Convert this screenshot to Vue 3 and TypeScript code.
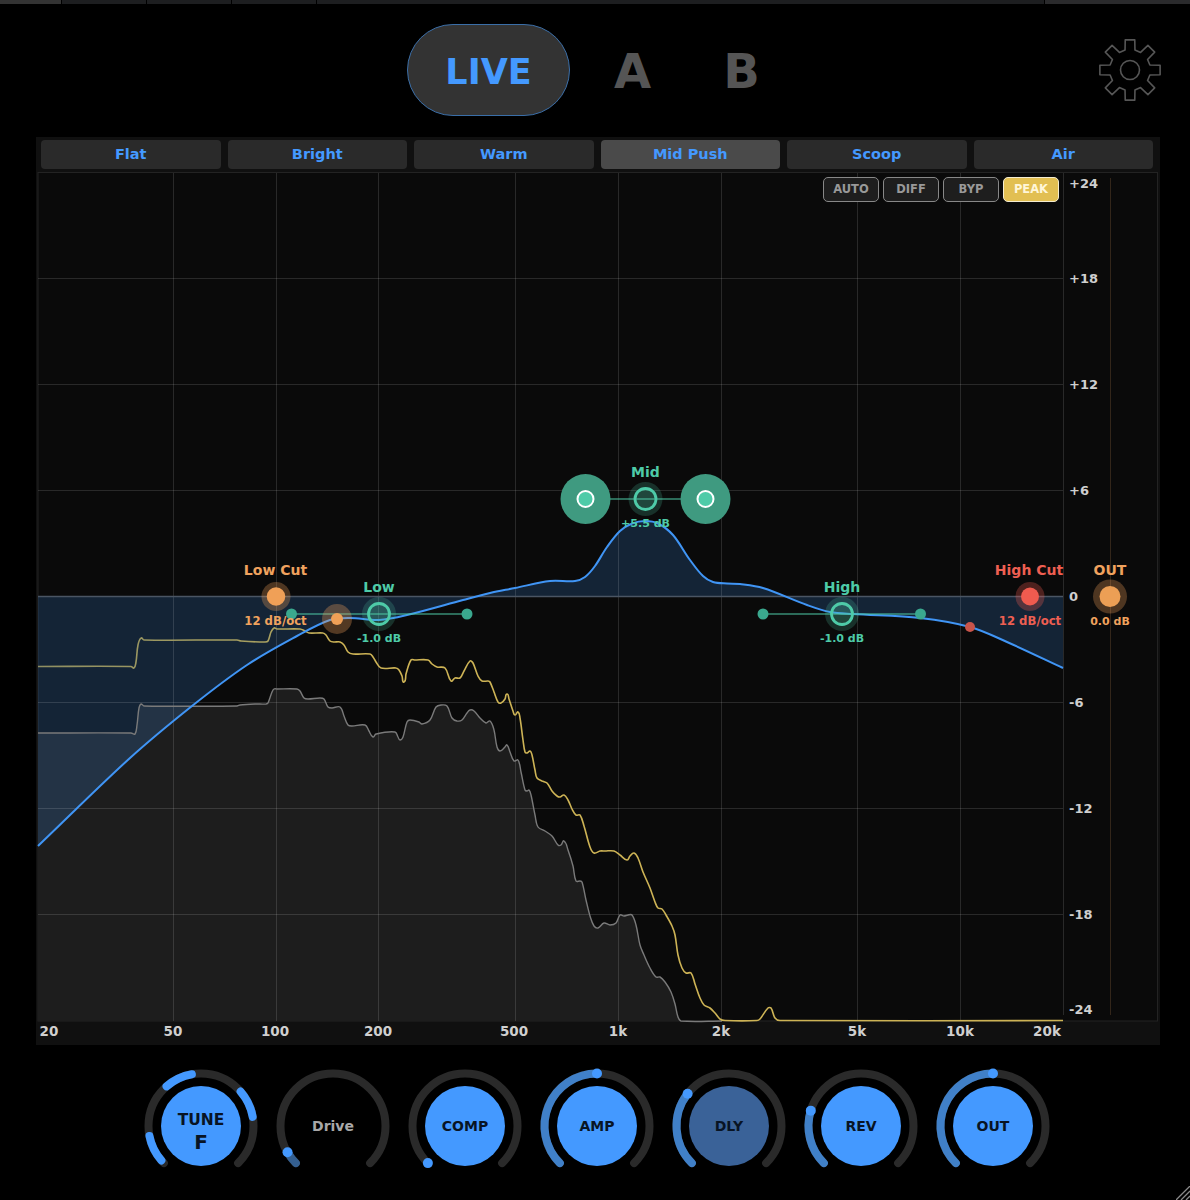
<script setup lang="ts">
import { computed } from 'vue'

type Pt = [number, number]

interface Knob {
  label: string
  sub?: string
  value?: number
  disc: 'on' | 'dim' | 'off'
  segments?: [number, number][]
}

const presets = ['Flat', 'Bright', 'Warm', 'Mid Push', 'Scoop', 'Air']
const toggles = ['AUTO', 'DIFF', 'BYP', 'PEAK']

const dbLabels = [
  { text: '+24', y: 183 }, { text: '+18', y: 278 }, { text: '+12', y: 384 }, { text: '+6', y: 490 },
  { text: '0', y: 596 }, { text: '-6', y: 702 }, { text: '-12', y: 808 }, { text: '-18', y: 914 }, { text: '-24', y: 1009 },
]
const hLines = [278.5, 384.5, 490.5, 702.5, 808.5, 914.5]
const vLines = [173.5, 276.5, 378.5, 515.5, 618.5, 721.5, 857.5, 960.5]
const freqLabels = [
  { text: '20', x: 49 }, { text: '50', x: 173 }, { text: '100', x: 275 }, { text: '200', x: 378 }, { text: '500', x: 514 },
  { text: '1k', x: 618 }, { text: '2k', x: 721 }, { text: '5k', x: 857 }, { text: '10k', x: 960 }, { text: '20k', x: 1047 },
]

const bands = [
  { name: 'Low', x: 379, gain: '-1.0 dB', y: 614, left: 291.5, right: 467, big: false },
  { name: 'Mid', x: 645.5, gain: '+5.5 dB', y: 499, left: 585.5, right: 705.5, big: true },
  { name: 'High', x: 842, gain: '-1.0 dB', y: 614, left: 763, right: 920.5, big: false },
]

const knobs: Knob[] = [
  { label: 'TUNE', sub: 'F', disc: 'on', segments: [[-131, -101], [-41, -10], [49, 80]] },
  { label: 'Drive', value: -120, disc: 'off' },
  { label: 'COMP', value: -135, disc: 'on' },
  { label: 'AMP', value: 0, disc: 'on' },
  { label: 'DLY', value: -52, disc: 'dim' },
  { label: 'REV', value: -73, disc: 'on' },
  { label: 'OUT', value: 0, disc: 'on' },
]

const peakPts: Pt[] = [
  [38, 666.5], [131, 666.5], [134, 668], [136, 662], [138, 645], [141, 638], [144, 640], [237, 640], [241, 641], [265, 642],
  [268, 641], [271, 632], [274, 628], [277, 629], [300, 629], [305, 631], [309, 633], [323, 633], [326, 635], [330, 641],
  [334, 642], [340, 642], [344, 645], [348, 652], [353, 654], [370, 654], [373, 657], [376, 662], [381, 668],
  [396, 668], [399, 670], [402, 676], [404, 682], [406, 674], [411, 660], [415, 660], [428, 660], [432, 664], [437, 667],
  [445, 668], [451, 681], [455, 678], [460, 678], [464, 671], [470, 661], [473, 663], [478, 676], [482, 681], [488, 681],
  [490, 682], [494, 692], [498, 702], [501, 703], [505, 699], [507, 694], [509, 699], [513, 711], [515, 715], [518, 712],
  [520, 718], [523, 740], [525, 752], [527, 753], [530, 751], [532, 755], [535, 770], [537, 778], [542, 781], [547, 783],
  [552, 791], [557, 796], [560, 797], [564, 795], [568, 800], [572, 809], [576, 815], [580, 815], [584, 826], [590, 847],
  [594, 853], [600, 851], [605, 851], [614, 851], [620, 855], [627, 860], [630, 856], [634, 853], [638, 858], [643, 872],
  [650, 888], [655, 902], [658, 908], [662, 909], [666, 915], [672, 926], [675, 935], [678, 955], [682, 968], [686, 973],
  [691, 973], [695, 984], [700, 998], [704, 1005], [710, 1008], [715, 1013], [720, 1019], [725, 1020.5], [757, 1020.5],
  [760, 1019], [768, 1008], [771, 1008], [775, 1018], [780, 1020.5], [1063, 1020.5],
]

const rmsPts: Pt[] = [
  [38, 733], [131, 733], [135, 734], [137, 725], [139, 708], [141, 704], [144, 706], [237, 706], [240, 705], [255, 704],
  [266, 704], [268, 703], [272, 692], [274, 689], [277, 689], [297, 689], [300, 691], [304, 698], [308, 699], [320, 698],
  [324, 699], [328, 707], [332, 708], [340, 707], [344, 716], [348, 725], [352, 726], [365, 725], [369, 731], [373, 737],
  [376, 734], [395, 732], [398, 737], [400, 740], [403, 737], [407, 722], [410, 720], [419, 722], [422, 724], [430, 720],
  [436, 707], [441, 705], [447, 706], [452, 718], [457, 721], [462, 720], [467, 713], [470, 710], [474, 711], [480, 718],
  [486, 723], [490, 721], [494, 730], [497, 747], [500, 751], [505, 747], [507, 745], [510, 752], [514, 761], [518, 760],
  [521, 772], [525, 790], [527, 791], [529, 790], [531, 795], [535, 815], [538, 827], [545, 831], [552, 836], [558, 845],
  [561, 845], [564, 841], [568, 850], [573, 866], [576, 881], [580, 881], [582, 882], [586, 900], [590, 916], [594, 926],
  [598, 928], [604, 923], [610, 925], [616, 923], [620, 915], [624, 916], [628, 915], [632, 915], [636, 925], [640, 945],
  [644, 955], [650, 968], [656, 977], [660, 977], [665, 982], [671, 992], [675, 1004], [678, 1017], [681, 1021], [722, 1021],
]

const eqPts: Pt[] = [
  [38, 846], [130, 758], [192, 706], [247, 665], [297, 636], [330, 620], [350, 618], [379, 620],
  [407, 615], [463, 600], [490, 593], [515, 588], [550, 581], [575, 581], [585, 577], [595, 566], [607, 547], [620, 531],
  [632, 523.5], [645, 521], [658, 523.5], [673, 535], [690, 560], [703, 576], [713, 582], [727, 583.5], [740, 584], [763, 588],
  [807, 605], [830, 612], [853, 614], [920, 618], [970, 627], [1007, 642], [1063, 668],
]

// spline through the traced points, handles scaled to each segment so long flats don't kink
function smooth(pts: Pt[]): string {
  let d = `M${pts[0][0]} ${pts[0][1]}`
  for (let i = 0; i < pts.length - 1; i++) {
    const p0 = pts[Math.max(i - 1, 0)]
    const p1 = pts[i]
    const p2 = pts[i + 1]
    const p3 = pts[Math.min(i + 2, pts.length - 1)]
    const len = Math.hypot(p2[0] - p1[0], p2[1] - p1[1]) / 3
    const l1 = Math.hypot(p2[0] - p0[0], p2[1] - p0[1]) || 1
    const l2 = Math.hypot(p3[0] - p1[0], p3[1] - p1[1]) || 1
    const c1x = p1[0] + ((p2[0] - p0[0]) / l1) * len
    const c1y = p1[1] + ((p2[1] - p0[1]) / l1) * len
    const c2x = p2[0] - ((p3[0] - p1[0]) / l2) * len
    const c2y = p2[1] - ((p3[1] - p1[1]) / l2) * len
    d += `C${c1x.toFixed(1)} ${c1y.toFixed(1)} ${c2x.toFixed(1)} ${c2y.toFixed(1)} ${p2[0]} ${p2[1]}`
  }
  return d
}

const peakLine = computed(() => smooth(peakPts))
const rmsLine = computed(() => smooth(rmsPts))
const rmsFill = computed(() => `${smooth(rmsPts)}L722 1021L38 1021Z`)
const eqLine = computed(() => smooth(eqPts))
const eqFill = computed(() => `${smooth(eqPts)}L1063 596.5L38 596.5Z`)

const R = 52.5

function polar(r: number, deg: number): Pt {
  const a = (deg * Math.PI) / 180
  return [r * Math.sin(a), -r * Math.cos(a)]
}

function arc(from: number, to: number): string {
  const [x1, y1] = polar(R, from)
  const [x2, y2] = polar(R, to)
  const large = to - from > 180 ? 1 : 0
  return `M${x1.toFixed(2)} ${y1.toFixed(2)}A${R} ${R} 0 ${large} 1 ${x2.toFixed(2)} ${y2.toFixed(2)}`
}

const gearPath = computed(() => {
  const pts: string[] = []
  for (let i = 0; i < 8; i++) {
    const a = i * 45
    const corners: [number, number][] = [[20.5, a - 14], [30.5, a - 9], [30.5, a + 9], [20.5, a + 14]]
    for (const [r, deg] of corners) {
      const [x, y] = polar(r, deg)
      pts.push(`${x.toFixed(2)} ${y.toFixed(2)}`)
    }
  }
  return `M${pts.join('L')}Z`
})
</script>

<template>
  <div class="app">
    <div class="tabstrip">
      <span class="tab first"></span>
      <span class="tab short"></span>
      <span class="tab short"></span>
      <span class="tab short"></span>
      <span class="tab"></span>
      <span class="tab short lit"></span>
    </div>

    <header class="header">
      <button class="live">LIVE</button>
      <button class="slot">A</button>
      <button class="slot">B</button>
      <svg class="gear" viewBox="-32 -32 64 64" width="64" height="64">
        <path :d="gearPath" fill="none" stroke="#565656" stroke-width="1.6" stroke-linejoin="round" />
        <circle r="9.5" fill="none" stroke="#565656" stroke-width="1.6" />
      </svg>
    </header>

    <section class="panel">
      <div class="presets">
        <button v-for="p in presets" :key="p" class="preset" :class="{ active: p === 'Mid Push' }">{{ p }}</button>
      </div>

      <div class="graph">
        <div class="toggles">
          <button v-for="t in toggles" :key="t" class="toggle" :class="{ on: t === 'PEAK' }">{{ t }}</button>
        </div>

        <svg class="plot" viewBox="36 172 1124 873" width="1124" height="873">
          <defs>
            <linearGradient id="peakStroke" gradientUnits="userSpaceOnUse" x1="38" y1="0" x2="340" y2="0">
              <stop offset="0" stop-color="#8f8f62" />
              <stop offset="0.75" stop-color="#a8a060" />
              <stop offset="1" stop-color="#cdb355" />
            </linearGradient>
          </defs>
          <rect x="38" y="172" width="1119.5" height="849" fill="#0a0a0a" />
          <rect x="38" y="172.5" width="1119.5" height="848.5" fill="none" stroke="#232323" />

          <path :d="rmsFill" fill="#1d1d1d" />
          <path :d="eqFill" fill="rgba(68,153,255,0.18)" />

          <line v-for="y in hLines" :key="y" x1="38" :y1="y" x2="1063" :y2="y" class="grid" />
          <line v-for="x in vLines" :key="x" :x1="x" y1="173" :x2="x" y2="1021" class="grid" />
          <line x1="1063.5" y1="173" x2="1063.5" y2="1015" class="grid" />
          <line x1="1110.5" y1="178" x2="1110.5" y2="1015" stroke="#33261a" />
          <line x1="38" y1="596.5" x2="1063" y2="596.5" stroke="#4a5563" stroke-width="1.4" />

          <path :d="rmsLine" fill="none" stroke="#7a7a7a" stroke-width="1.4" />
          <path :d="peakLine" fill="none" stroke="url(#peakStroke)" stroke-width="1.6" />
          <path :d="eqLine" fill="none" stroke="#4095f5" stroke-width="2" />

          <g v-for="b in bands" :key="b.name">
            <line :x1="b.left" :y1="b.y" :x2="b.right" :y2="b.y" stroke="rgba(78,203,168,0.5)" stroke-width="2" />
            <template v-if="b.big">
              <circle :cx="b.left" :cy="b.y" r="25" fill="#3f9a80" />
              <circle :cx="b.right" :cy="b.y" r="25" fill="#3f9a80" />
              <circle :cx="b.left" :cy="b.y" r="8" fill="#4ecba8" stroke="#fff" stroke-width="2" />
              <circle :cx="b.right" :cy="b.y" r="8" fill="#4ecba8" stroke="#fff" stroke-width="2" />
            </template>
            <template v-else>
              <circle :cx="b.left" :cy="b.y" r="5.5" fill="#3aa88e" />
              <circle :cx="b.right" :cy="b.y" r="5.5" fill="#3aa88e" />
            </template>
            <circle :cx="b.x" :cy="b.y" r="17" fill="rgba(78,203,168,0.2)" />
            <circle :cx="b.x" :cy="b.y" r="10.5" fill="rgba(78,203,168,0.15)" stroke="#4ecba8" stroke-width="2.8" />
            <text :x="b.x" :y="b.y - 27" class="node-name teal">{{ b.name }}</text>
            <text :x="b.x" :y="b.y + 24" class="node-sub teal">{{ b.gain }}</text>
          </g>

          <circle cx="276" cy="596.5" r="14.5" fill="rgba(240,160,90,0.3)" />
          <circle cx="276" cy="596.5" r="9.3" fill="#f0a057" />
          <circle cx="337" cy="619" r="15" fill="rgba(240,160,90,0.32)" />
          <circle cx="337" cy="619" r="6" fill="#f0a057" />
          <text x="275.5" y="570" class="node-name orange">Low Cut</text>
          <text x="275.5" y="621" class="node-sub slope orange">12 dB/oct</text>

          <circle cx="1030" cy="596.5" r="14.5" fill="rgba(239,91,79,0.3)" />
          <circle cx="1030" cy="596.5" r="9" fill="#ef5b4f" />
          <circle cx="970" cy="627" r="5" fill="#c9544a" />
          <text x="1029" y="570" class="node-name red">High Cut</text>
          <text x="1030" y="621" class="node-sub slope red">12 dB/oct</text>

          <circle cx="1110" cy="596.5" r="17" fill="rgba(240,160,90,0.3)" />
          <circle cx="1110" cy="596.5" r="10.5" fill="#ec9f55" />
          <text x="1110" y="570" class="node-name orange">OUT</text>
          <text x="1110" y="621" class="node-sub orange">0.0 dB</text>

          <text v-for="l in dbLabels" :key="l.text" x="1069" :y="l.y" class="db">{{ l.text }}</text>
          <text v-for="l in freqLabels" :key="l.text" :x="l.x" y="1030.5" class="freq">{{ l.text }}</text>
        </svg>
      </div>
    </section>

    <div class="knobs">
      <svg v-for="k in knobs" :key="k.label" class="knob" viewBox="-60 -60 120 120" width="120" height="120">
        <path :d="arc(-135, 135)" class="track" />
        <template v-if="k.segments">
          <path v-for="s in k.segments" :key="s[0]" :d="arc(s[0], s[1])" class="segment" />
        </template>
        <template v-if="k.value !== undefined">
          <path :d="arc(-135, k.value)" class="fill" :class="{ dark: k.disc === 'off' }" />
          <circle :cx="polar(R, k.value)[0]" :cy="polar(R, k.value)[1]" r="5" fill="#4499ff" />
        </template>
        <circle v-if="k.disc !== 'off'" r="40" :fill="k.disc === 'dim' ? '#3a6298' : '#4499ff'" />
        <text v-if="k.sub" y="-6" class="knob-label tune">{{ k.label }}</text>
        <text v-if="k.sub" y="16" class="knob-sub">{{ k.sub }}</text>
        <text v-if="!k.sub" y="0" class="knob-label" :class="{ off: k.disc === 'off' }">{{ k.label }}</text>
      </svg>
    </div>

    <svg class="grip" viewBox="0 0 14 14" width="14" height="14">
      <path d="M0 14L14 0M5 14L14 5M10 14L14 10" stroke="#8a8a8a" stroke-width="1.3" fill="none" />
    </svg>
  </div>
</template>

<style>
html,
body {
  background: #000;
}
</style>

<style scoped>
.app {
  position: relative;
  width: 1190px;
  height: 1200px;
  overflow: hidden;
  background: #000;
  font-family: 'DejaVu Sans', Verdana, sans-serif;
}

button {
  font-family: inherit;
  font-weight: 700;
  border: none;
  padding: 0;
  cursor: pointer;
}

.tabstrip {
  display: flex;
  gap: 1px;
  height: 4px;
  background: #000;
}

.tab {
  flex: 1;
  background: #1d1e20;
}

.tab.short {
  flex: 0 0 84px;
}

.tab.lit {
  flex: 0 0 145px;
  background: #2a2a2c;
}

.tab.first {
  flex: 0 0 61px;
  background: #333;
}

.header {
  display: flex;
  align-items: center;
  height: 133px;
  padding: 0 28px 0 407px;
  box-sizing: border-box;
  gap: 16px;
}

.live {
  width: 163px;
  height: 92px;
  margin-top: -1px;
  padding-top: 3px;
  border-radius: 46px;
  border: 1px solid #3a6ea8;
  background: #333;
  color: #4499ff;
  font-size: 35px;
}

.slot {
  width: 93px;
  height: 92px;
  background: none;
  color: #555;
  font-size: 48px;
}

.gear {
  margin-left: auto;
  margin-top: -1px;
}

.panel {
  width: 1124px;
  height: 908px;
  margin-left: 36px;
  background: #101010;
}

.presets {
  display: grid;
  grid-template-columns: repeat(6, 1fr);
  gap: 7px;
  height: 29px;
  padding: 3px 7px 3px 5px;
}

.preset {
  padding-bottom: 2px;
  border-radius: 4px;
  background: #2a2a2a;
  color: #4499ff;
  font-size: 14.5px;
}

.preset.active {
  background: #4a4a4a;
}

.graph {
  position: relative;
}

.plot {
  display: block;
}

.toggles {
  position: absolute;
  top: 5px;
  left: 787px;
  display: flex;
  gap: 4px;
}

.toggle {
  width: 56px;
  height: 25px;
  padding-bottom: 1px;
  border: 1px solid #888;
  border-radius: 5px;
  background: #1e1e1e;
  color: #999;
  font-size: 11.5px;
}

.toggle.on {
  background: #e2bf52;
  border-color: #f4ecd0;
  color: #fff6d8;
}

.grid {
  stroke: rgba(255, 255, 255, 0.13);
  stroke-width: 1;
}

.node-name {
  font-size: 14px;
  font-weight: 700;
  text-anchor: middle;
  dominant-baseline: central;
}

.node-sub {
  font-size: 11px;
  font-weight: 700;
  text-anchor: middle;
  dominant-baseline: central;
}

.node-sub.slope {
  font-size: 11.7px;
}

.teal {
  fill: #4ecba8;
}

.orange {
  fill: #f0a25e;
}

.red {
  fill: #ee5f52;
}

.db,
.freq {
  font-size: 13px;
  font-weight: 700;
  fill: #cfcfcf;
  dominant-baseline: central;
}

.freq {
  font-size: 13.5px;
  text-anchor: middle;
}

.knobs {
  display: flex;
  gap: 12px;
  margin-top: 20.5px;
  padding-left: 140.5px;
}

.knob {
  overflow: visible;
}

.track,
.segment,
.fill {
  fill: none;
  stroke-width: 8;
  stroke-linecap: round;
}

.track {
  stroke: #2a2a2a;
}

.segment {
  stroke: #4499ff;
}

.fill {
  stroke: #4080c8;
}

.fill.dark {
  stroke: #345f90;
}

.knob-label {
  font-size: 14px;
  font-weight: 700;
  fill: #081424;
  text-anchor: middle;
  dominant-baseline: central;
}

.knob-label.tune {
  font-size: 15.5px;
}

.knob-label.off {
  fill: #a8a8a8;
}

.knob-sub {
  font-size: 20px;
  font-weight: 700;
  fill: #081424;
  text-anchor: middle;
  dominant-baseline: central;
}

.grip {
  position: absolute;
  right: 0;
  bottom: 0;
}
</style>
